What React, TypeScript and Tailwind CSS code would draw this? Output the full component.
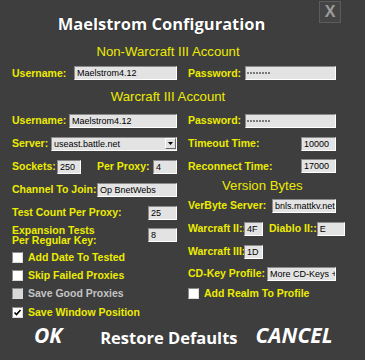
const lbl = "text-[#ecec00] font-bold text-[10.5px] leading-none whitespace-nowrap";
const box =
  "h-[14px] shrink-0 bg-[#e3e3e3] border border-t-[#8a8a8a] border-l-[#8a8a8a] border-b-white border-r-white text-[9px] leading-[12px] text-black px-[2px] overflow-hidden whitespace-nowrap";

function Field({ value, className }: { value: string; className: string }) {
  return <div className={`${box} ${className}`}>{value}</div>;
}

function Secret({ className }: { className: string }) {
  return (
    <div className={`${box} ${className} flex items-center gap-[1px] pl-[1px]`}>
      {[0, 1, 2, 3, 4, 5, 6, 7].map((i) => (
        <span key={i} className="w-[2px] h-[2px] bg-[#7a7a7a]" />
      ))}
    </div>
  );
}

function Check({ label, checked, disabled }: { label: string; checked?: boolean; disabled?: boolean }) {
  return (
    <div className="flex items-center gap-[5px]">
      <div
        className={`w-[11px] h-[11px] border border-t-[#8a8a8a] border-l-[#8a8a8a] border-b-[#dcdcdc] border-r-[#dcdcdc] flex items-center justify-center ${
          disabled ? "bg-[#d8d8d8]" : "bg-white"
        }`}
      >
        {checked && (
          <svg width="9" height="9" viewBox="0 0 9 9">
            <path d="M1.5 4.5 L3.5 6.5 L7.5 2" stroke="black" strokeWidth="1.6" fill="none" />
          </svg>
        )}
      </div>
      <span className={disabled ? "text-[#c4c4c4] font-bold text-[10.5px] leading-none" : lbl}>{label}</span>
    </div>
  );
}

export default function App() {
  return (
    <div
      className="w-[365px] h-[360px] bg-[#3e3e3e] relative overflow-hidden"
      style={{ fontFamily: "'Liberation Sans', Arial, sans-serif" }}
    >
      <div className="absolute left-[319px] top-[1px] w-[22px] h-[22px] border border-[#5c5c5c] bg-[#454545] flex items-center justify-center text-[#9c9c9c] font-bold text-[16px]">
        X
      </div>

      <div
        className="pt-[12px] h-[44px] text-center text-white font-bold text-[16.5px] leading-[24px] pr-[42px]"
        style={{ fontFamily: "'Open Sans', sans-serif", textShadow: "0 0 1px #000" }}
      >
        Maelstrom Configuration
      </div>

      <div className="text-center text-[#ecec00] text-[13.2px] leading-[16px] h-[16px] pr-[29px]">
        Non-Warcraft III Account
      </div>

      <div className="flex h-[24px] items-center px-[12px] mt-[1px]">
        <div className="w-[165px] shrink-0 flex items-center">
          <span className={lbl}>Username:</span>
          <Field value="Maelstrom4.12" className="ml-auto w-[103px]" />
        </div>
        <div className="ml-[11px] w-[148px] shrink-0 flex items-center">
          <span className={lbl}>Password:</span>
          <Secret className="ml-auto w-[91px]" />
        </div>
      </div>

      <div className="text-center text-[#ecec00] text-[13.2px] leading-[16px] h-[24px] pt-[4px] pr-[29px]">
        Warcraft III Account
      </div>

      <div className="flex px-[12px]">
        <div className="w-[165px] shrink-0 flex flex-col">
          <div className="h-[23px] flex items-center">
            <span className={lbl}>Username:</span>
            <Field value="Maelstrom4.12" className="ml-auto w-[108px]" />
          </div>
          <div className="h-[23px] flex items-center">
            <span className={lbl}>Server:</span>
            <div className={`${box} ml-auto w-[126px] flex items-center justify-between pr-0`}>
              <span>useast.battle.net</span>
              <div className="w-[11px] h-[11px] bg-[#e3e3e3] border border-t-white border-l-white border-b-[#6a6a6a] border-r-[#6a6a6a] flex items-center justify-center">
                <svg width="5" height="3" viewBox="0 0 5 3">
                  <path d="M0 0 H5 L2.5 3 Z" fill="black" />
                </svg>
              </div>
            </div>
          </div>
          <div className="h-[23px] flex items-center">
            <span className={`${lbl} w-[45px]`}>Sockets:</span>
            <Field value="250" className="w-[24px]" />
            <span className={`${lbl} ml-[16px]`}>Per Proxy:</span>
            <Field value="4" className="ml-auto w-[24px]" />
          </div>
          <div className="h-[23px] flex items-center">
            <span className={lbl}>Channel To Join:</span>
            <Field value="Op BnetWebs" className="ml-auto w-[80px]" />
          </div>
          <div className="h-[23px] flex items-center">
            <span className={lbl}>Test Count Per Proxy:</span>
            <Field value="25" className="ml-auto w-[29px]" />
          </div>
          <div className="h-[22px] flex items-center">
            <span className={`${lbl} leading-[12px]`}>
              Expansion Tests
              <br />
              Per Regular Key:
            </span>
            <Field value="8" className="ml-auto w-[29px]" />
          </div>
          <div className="h-[20px] flex items-center pt-[2px]">
            <Check label="Add Date To Tested" />
          </div>
          <div className="h-[18px] flex items-center">
            <Check label="Skip Failed Proxies" />
          </div>
          <div className="h-[19px] flex items-center">
            <Check label="Save Good Proxies" disabled />
          </div>
          <div className="h-[18px] flex items-center">
            <Check label="Save Window Position" checked />
          </div>
        </div>

        <div className="ml-[11px] w-[148px] shrink-0 flex flex-col">
          <div className="h-[23px] flex items-center">
            <span className={lbl}>Password:</span>
            <Secret className="ml-auto w-[91px]" />
          </div>
          <div className="h-[23px] flex items-center">
            <span className={lbl}>Timeout Time:</span>
            <Field value="10000" className="ml-auto w-[35px]" />
          </div>
          <div className="h-[22px] flex items-center">
            <span className={lbl}>Reconnect Time:</span>
            <Field value="17000" className="ml-auto w-[35px]" />
          </div>
          <div className="h-[17px] flex items-center pl-[34px]">
            <span className="text-[#ecec00] text-[13.2px] leading-none">Version Bytes</span>
          </div>
          <div className="h-[23px] flex items-center">
            <span className={lbl}>VerByte Server:</span>
            <Field value="bnls.mattkv.net" className="ml-auto w-[64px]" />
          </div>
          <div className="h-[23px] flex items-center">
            <span className={`${lbl} w-[56px]`}>Warcraft II::</span>
            <Field value="4F" className="w-[19px]" />
            <span className={`${lbl} ml-[6px]`}>Diablo II::</span>
            <Field value="E" className="ml-auto w-[28px]" />
          </div>
          <div className="h-[23px] flex items-center">
            <span className={`${lbl} w-[56px]`}>Warcraft III:</span>
            <Field value="1D" className="w-[19px]" />
          </div>
          <div className="h-[21px] flex items-center">
            <span className={lbl}>CD-Key Profile:</span>
            <Field value="More CD-Keys + Realm" className="ml-auto w-[69px]" />
          </div>
          <div className="h-[19px] flex items-center">
            <Check label="Add Realm To Profile" />
          </div>
        </div>
      </div>

      <div
        className="flex items-center h-[30px] text-white font-bold"
        style={{ fontFamily: "'Open Sans', sans-serif" }}
      >
        <span className="ml-[34px] text-[21px] italic">OK</span>
        <span className="ml-[38px] text-[16.5px] mt-[4px]">Restore Defaults</span>
        <span className="ml-[18px] text-[21px] italic">CANCEL</span>
      </div>
    </div>
  );
}
